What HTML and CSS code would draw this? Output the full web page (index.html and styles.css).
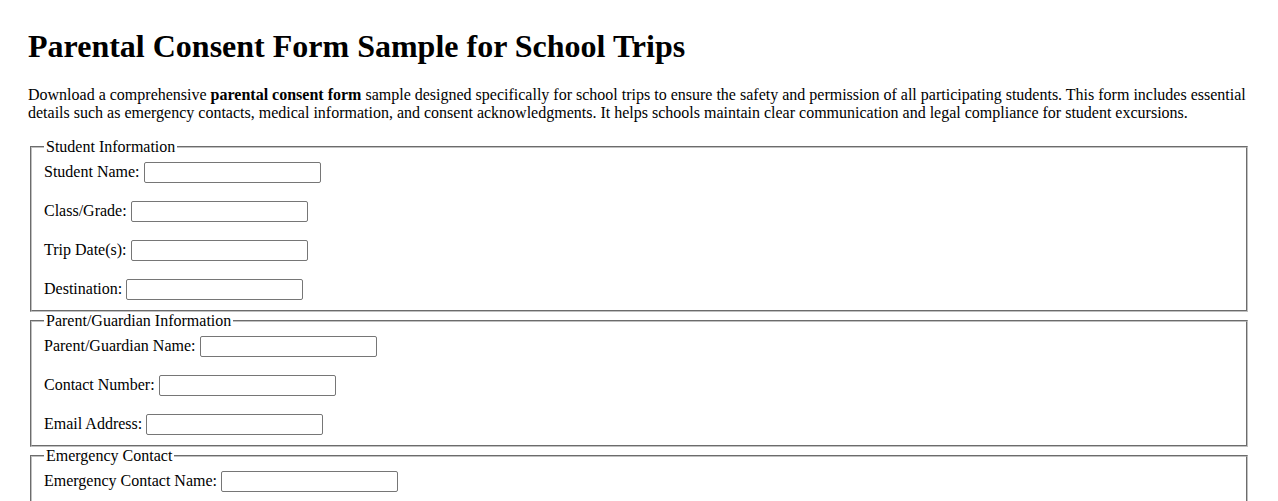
FILE: index.html
```html
<!DOCTYPE html>
<html lang="en">
<head>
    <meta charset="UTF-8">
    <meta name="viewport" content="width=device-width, initial-scale=1.0">
    <title>Parental Consent Form Sample for School Trips</title>
    <link rel="stylesheet" href="styles.css">
</head>
<body>
    <h1>Parental Consent Form Sample for School Trips</h1>
    <p>Download a comprehensive <strong>parental consent form</strong> sample designed specifically for school trips to ensure the safety and permission of all participating students. This form includes essential details such as emergency contacts, medical information, and consent acknowledgments. It helps schools maintain clear communication and legal compliance for student excursions.</p>

    <form>
        <fieldset>
            <legend>Student Information</legend>
            <label for="studentName">Student Name:</label>
            <input type="text" id="studentName" name="studentName"><br><br>
            <label for="classGrade">Class/Grade:</label>
            <input type="text" id="classGrade" name="classGrade"><br><br>
            <label for="tripDates">Trip Date(s):</label>
            <input type="text" id="tripDates" name="tripDates"><br><br>
            <label for="destination">Destination:</label>
            <input type="text" id="destination" name="destination">
        </fieldset>

        <fieldset>
            <legend>Parent/Guardian Information</legend>
            <label for="parentName">Parent/Guardian Name:</label>
            <input type="text" id="parentName" name="parentName"><br><br>
            <label for="contactNumber">Contact Number:</label>
            <input type="text" id="contactNumber" name="contactNumber"><br><br>
            <label for="email">Email Address:</label>
            <input type="text" id="email" name="email">
        </fieldset>

        <fieldset>
            <legend>Emergency Contact</legend>
            <label for="emergencyName">Emergency Contact Name:</label>
            <input type="text" id="emergencyName" name="emergencyName"><br><br>
            <label for="relationship">Relationship to Student:</label>
            <input type="text" id="relationship" name="relationship"><br><br>
            <label for="emergencyPhone">Emergency Phone Number:</label>
            <input type="text" id="emergencyPhone" name="emergencyPhone">
        </fieldset>

        <fieldset>
            <legend>Medical Information</legend>
            <label for="allergies">Allergies:</label>
            <input type="text" id="allergies" name="allergies"><br><br>
            <label for="medications">Medications:</label>
            <input type="text" id="medications" name="medications">
        </fieldset>

        <fieldset>
            <legend>Consent</legend>
            <input type="checkbox" id="consent" name="consent">
            <label for="consent">I give permission for my child to participate in this school trip.</label><br><br>
            <label for="signature">Parent/Guardian Signature:</label>
            <input type="text" id="signature" name="signature"><br><br>
            <label for="signDate">Date:</label>
            <input type="text" id="signDate" name="signDate">
        </fieldset>
    </form>
</body>
</html>
```

FILE: styles.css
```css
body {
    font-family: "Liberation Serif", "Times New Roman", serif;
    font-size: 16px;
    color: #000;
    background-color: #fff;
    margin: 28px;
}

h1 {
    font-size: 32px;
    margin: 0 0 21px 0;
}

p {
    margin: 0 0 16px 0;
}

fieldset {
    margin: 0 2px;
    padding: 6px 12px 10px 12px;
    border: 2px groove #c0c0c0;
}

legend {
    padding: 0 2px;
}

input[type="text"] {
    box-sizing: border-box;
    width: 177px;
    height: 21px;
    padding: 1px 2px;
    border: 1px solid #767676;
    border-radius: 2px;
    font-family: "Liberation Sans", Arial, sans-serif;
    font-size: 13.33px;
}
```
